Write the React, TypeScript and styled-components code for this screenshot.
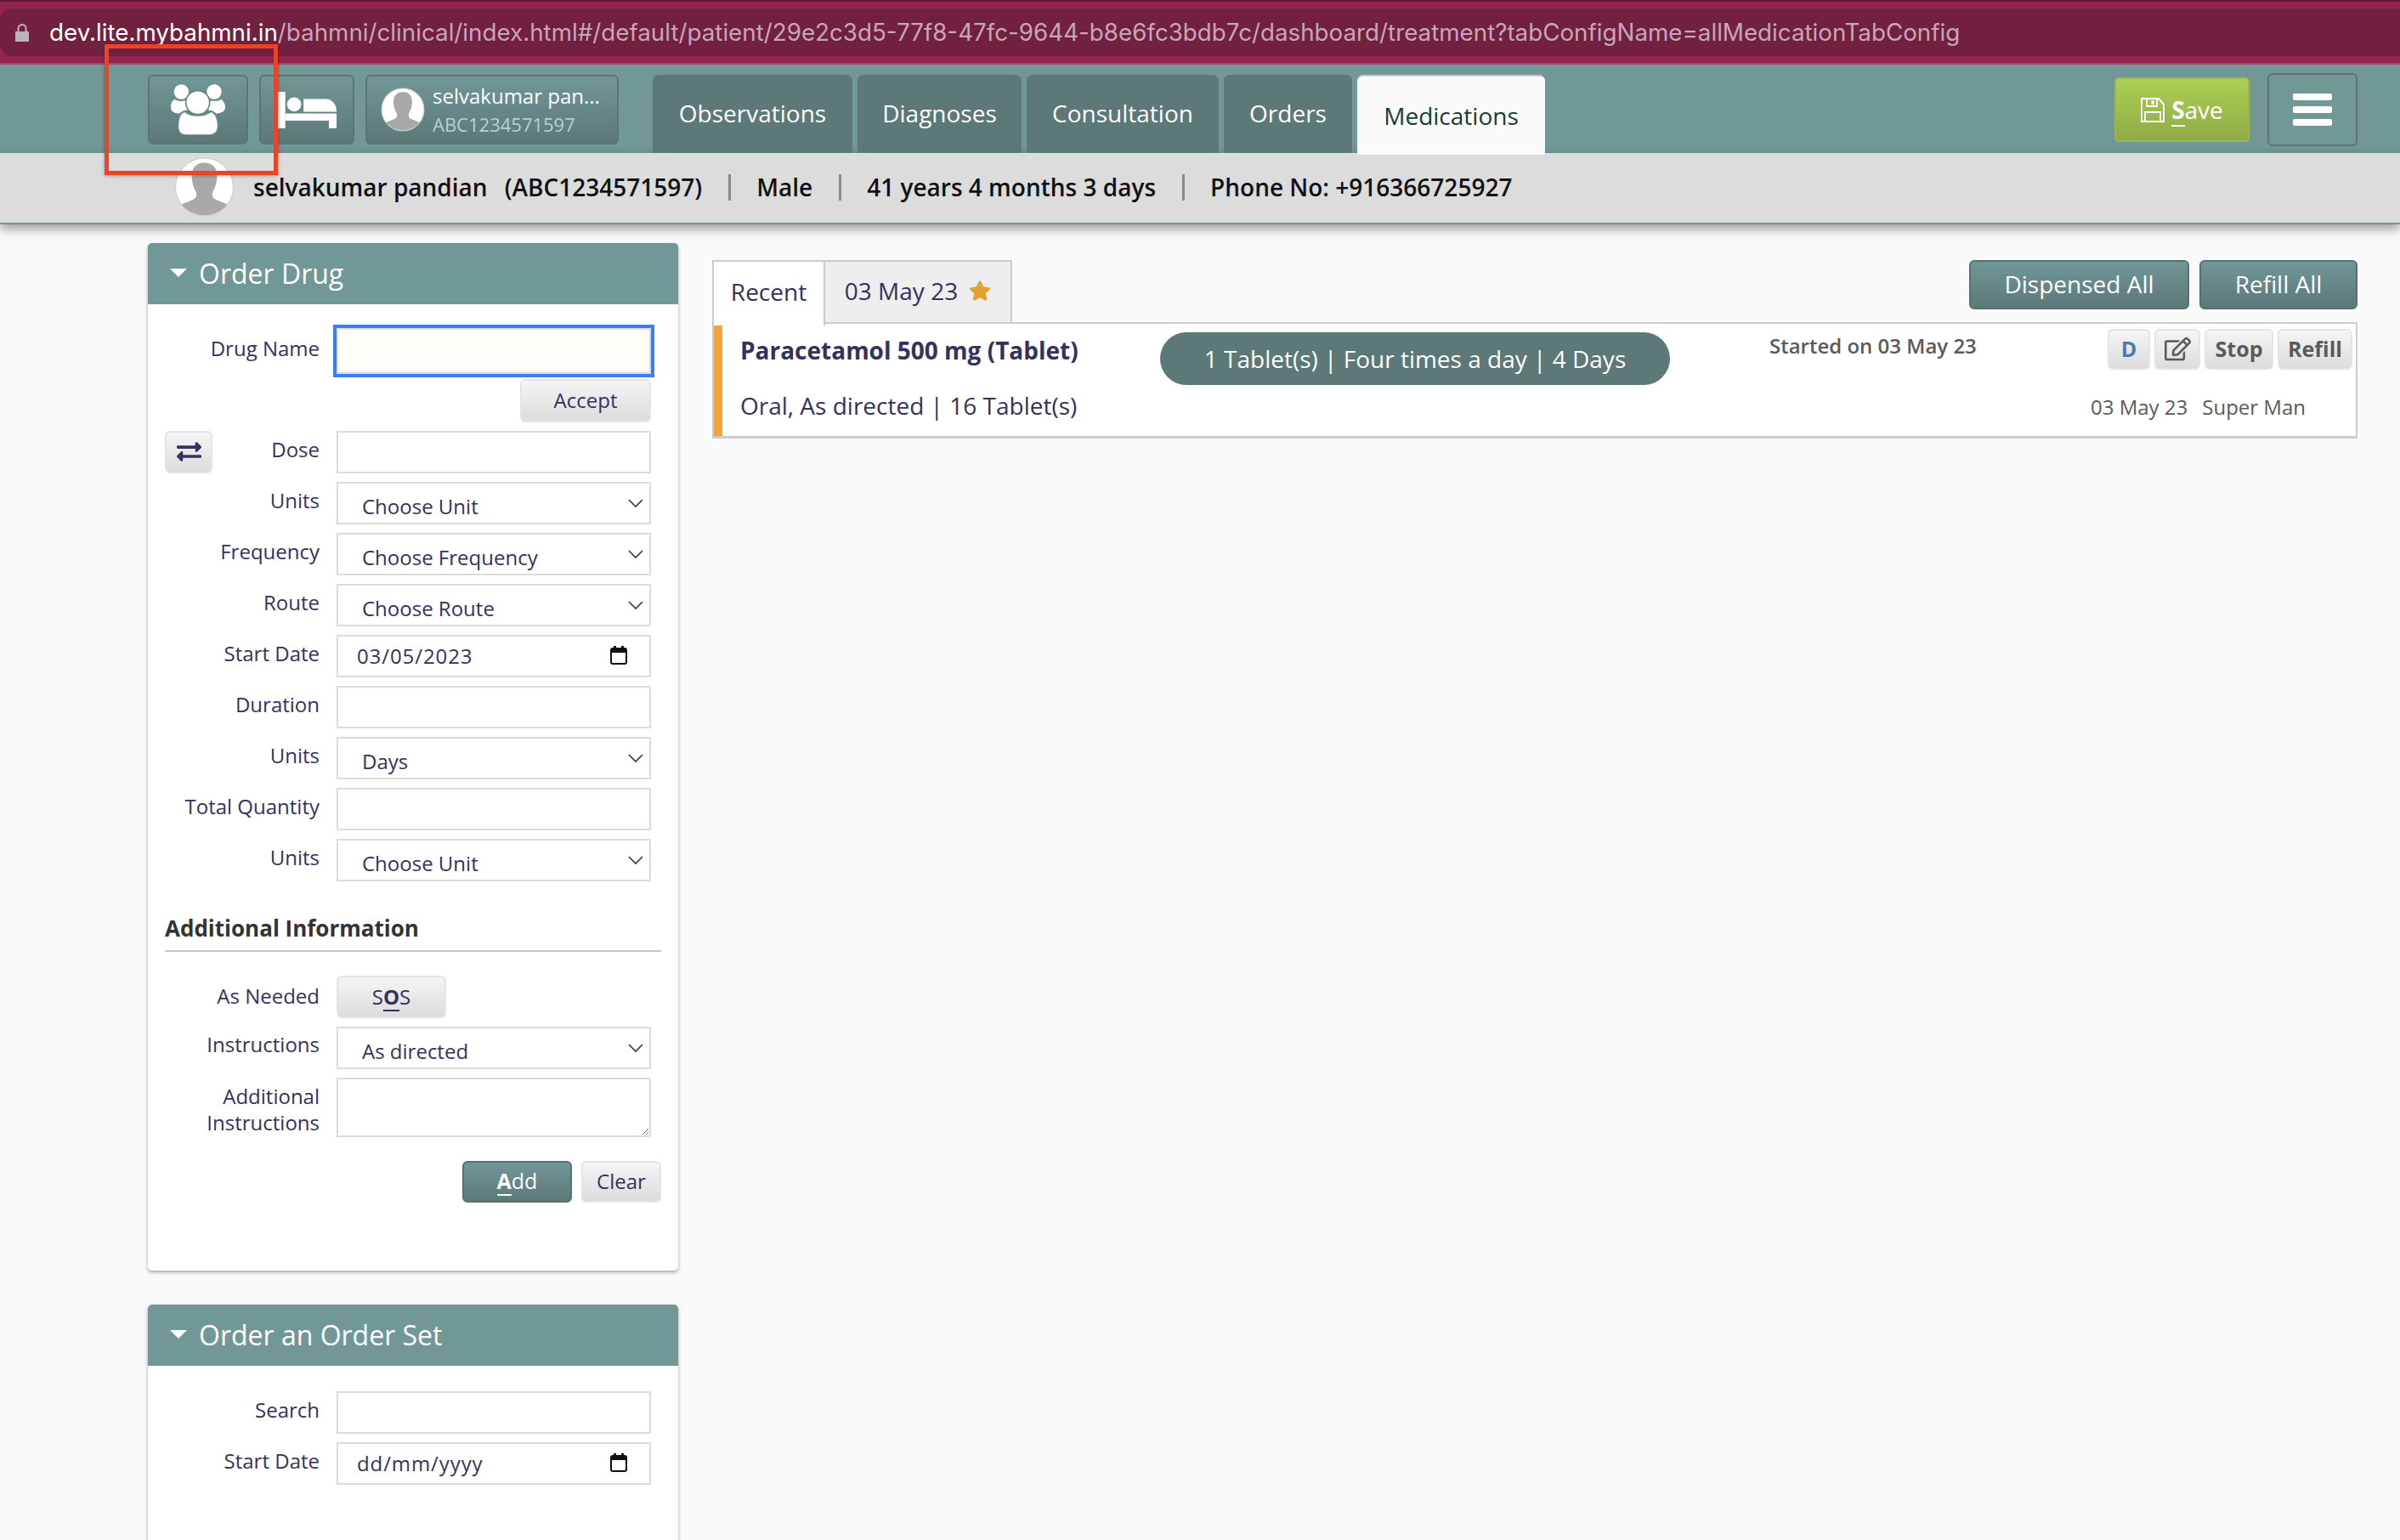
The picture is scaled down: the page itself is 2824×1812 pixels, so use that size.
import React from "react";
import styled, { createGlobalStyle } from "styled-components";
import { FaExchangeAlt, FaRegEdit, FaStar } from "react-icons/fa";

const GlobalStyle = createGlobalStyle`
  html, body {
    margin: 0;
    padding: 0;
    background: #fafafa;
  }
  * {
    box-sizing: border-box;
  }
  body {
    font-family: "Open Sans", "Noto Sans", sans-serif;
    color: #33325f;
  }
`;

const Page = styled.div`
  position: relative;
  width: 2824px;
  height: 1812px;
  overflow: hidden;
`;

const Annotation = styled.div`
  position: absolute;
  left: 123px;
  top: 52px;
  width: 204px;
  height: 154px;
  border: 5px solid #ea4325;
  box-shadow: 0 1px 4px rgba(0, 0, 0, 0.3);
  z-index: 20;
`;

const BrowserBar = styled.div`
  height: 76px;
  padding: 10px 0 8px;
  background: #93244f;
  border-top: 2px solid #5e1a3a;
  border-bottom: 2px solid #a8456c;
`;

const UrlBar = styled.div`
  height: 56px;
  margin-top: -2px;
  display: flex;
  align-items: center;
  gap: 24px;
  padding-left: 18px;
  background: #72203f;
  border-radius: 14px 0 0 14px;
  font-family: Inter, "Liberation Sans", sans-serif;
  font-size: 27.75px;
  color: #c9a5b8;
  white-space: nowrap;
`;

const Host = styled.span`
  color: #fff;
`;

const Header = styled.div`
  height: 104px;
  display: flex;
  padding: 12px 50px 0 174px;
  background: #719797;
`;

const HeaderButton = styled.div<{ $w: number }>`
  width: ${(p) => p.$w}px;
  height: 82px;
  margin-right: 13px;
  display: flex;
  align-items: center;
  justify-content: center;
  border: 2px solid #5a7574;
  border-radius: 6px;
  background: linear-gradient(#719797, #5c7877);
`;

const PatientButton = styled(HeaderButton)`
  justify-content: flex-start;
  gap: 9px;
  padding-left: 16px;
  margin-right: 40px;
`;

const SmallAvatar = styled.div`
  width: 52px;
  height: 52px;
`;

const PatientText = styled.div`
  display: flex;
  flex-direction: column;
  gap: 2px;
  color: #fff;
  font-size: 24px;
  line-height: 32px;
`;

const PatientId = styled.span`
  font-size: 22px;
  line-height: 30px;
  color: #b9cfcf;
`;

const TabRow = styled.div`
  display: flex;
  gap: 6px;
`;

const NavTab = styled.div<{ $w: number; $active?: boolean }>`
  width: ${(p) => p.$w}px;
  height: ${(p) => (p.$active ? 94 : 92)}px;
  display: flex;
  align-items: center;
  justify-content: center;
  padding-bottom: ${(p) => (p.$active ? 0 : 3)}px;
  border-radius: 7px 7px 0 0;
  font-size: 28px;
  position: relative;
  z-index: 2;
  background: ${(p) => (p.$active ? "#fafafa" : "#5c7877")};
  color: ${(p) => (p.$active ? "#123f3b" : "#fff")};
  border-top: ${(p) => (p.$active ? "2px solid #ccc" : "0")};
`;

const HeaderRight = styled.div`
  margin-left: auto;
  display: flex;
  align-items: center;
  gap: 21px;
  height: 86px;
  margin-top: -2px;
`;

const SaveButton = styled.div`
  width: 159px;
  height: 76px;
  display: flex;
  align-items: center;
  justify-content: center;
  gap: 8px;
  border: 2px solid #9ab84f;
  border-radius: 5px;
  background: linear-gradient(#abcf53, #8fab47);
  color: #fff;
  font-size: 28px;
`;

const Key = styled.span`
  display: inline-block;
  font-weight: 700;
  position: relative;
  &::after {
    content: "";
    position: absolute;
    left: 0;
    right: 0;
    bottom: -1px;
    height: 2px;
    background: currentColor;
  }
`;

const MenuButton = styled.div`
  width: 106px;
  height: 86px;
  display: flex;
  flex-direction: column;
  align-items: center;
  justify-content: center;
  gap: 7px;
  border: 2px solid #5a7574;
  border-radius: 6px;
`;

const MenuBar = styled.span`
  width: 46px;
  height: 8px;
  border-radius: 2px;
  background: #fff;
`;

const PatientBar = styled.div`
  height: 84px;
  display: flex;
  align-items: center;
  padding: 0 0 2px 205px;
  background: #dcdcdc;
  border-bottom: 2px solid #719797;
  box-shadow: 0 5px 12px rgba(0, 0, 0, 0.4);
  font-size: 28px;
  font-weight: 600;
  color: #111;
  position: relative;
  z-index: 1;
`;

const BigAvatar = styled.div`
  width: 71px;
  height: 72px;
  margin: 0 22px 0 0;
`;

const PatientName = styled.span`
  margin-right: 20px;
`;

const Separator = styled.span`
  width: 3px;
  height: 31px;
  margin: 0 30.5px;
  background: #8a8a8a;
`;

const Body = styled.div`
  display: grid;
  grid-template-columns: 624px 1936px;
  column-gap: 40px;
  padding: 22px 0 0 174px;
`;

const LeftColumn = styled.div`
  display: flex;
  flex-direction: column;
  gap: 40px;
`;

const Panel = styled.div<{ $h: number }>`
  height: ${(p) => p.$h}px;
  background: #fff;
  border-radius: 5px;
  box-shadow: 0 2px 4px rgba(0, 0, 0, 0.35);
`;

const PanelHead = styled.div`
  height: 72px;
  display: flex;
  align-items: center;
  gap: 14px;
  padding: 0 0 2px 26px;
  background: #719797;
  border-radius: 5px 5px 0 0;
  color: #fff;
  font-size: 32px;
`;

const Caret = styled.span`
  width: 0;
  height: 0;
  border-left: 10px solid transparent;
  border-right: 10px solid transparent;
  border-top: 10px solid #fff;
`;

const PanelBody = styled.div<{ $top: number }>`
  padding: ${(p) => p.$top}px 20px 0;
`;

const Row = styled.div<{ $gap?: number }>`
  display: grid;
  grid-template-columns: 182px 370px;
  column-gap: 20px;
  margin-bottom: ${(p) => p.$gap ?? 10}px;
`;

const LabelCell = styled.div`
  display: flex;
  justify-content: space-between;
  align-items: flex-start;
`;

const Label = styled.label<{ $top?: number }>`
  margin-left: auto;
  font-size: 24px;
  line-height: 31px;
  padding-top: ${(p) => p.$top ?? 6}px;
  text-align: right;
`;

const Input = styled.input`
  display: block;
  width: 370px;
  height: 50px;
  padding: 0 22px 2px;
  border: 2px solid #dcdcdc;
  border-radius: 0;
  background: #fff;
  outline: none;
  font-family: inherit;
  font-size: 24px;
  letter-spacing: 0.9px;
  color: #33325f;
`;

const DrugInput = styled(Input)`
  height: 54px;
  background: #fffdf8;
  border-color: #dcdcdc;
  outline: 4px solid #3b7df5;
  outline-offset: 0;
`;

const SelectWrap = styled.div`
  position: relative;
  width: 370px;
`;

const Select = styled.select`
  display: block;
  width: 370px;
  height: 50px;
  padding: 6px 30px 0 28px;
  appearance: none;
  border: 2px solid #dcdcdc;
  border-radius: 0;
  background: #fff;
  font-family: inherit;
  font-size: 24px;
  color: #33325f;
`;

const Chevron = styled.svg`
  position: absolute;
  right: 9px;
  top: 19px;
  width: 18px;
  height: 12px;
`;

const CalendarIcon = styled.svg`
  position: absolute;
  right: 28px;
  top: 13px;
  width: 20px;
  height: 22px;
`;

const GreyButton = styled.div<{ $w: number; $h: number }>`
  width: ${(p) => p.$w}px;
  height: ${(p) => p.$h}px;
  display: flex;
  align-items: center;
  justify-content: center;
  padding-bottom: 2px;
  border: 2px solid #e4e4e4;
  border-radius: 6px;
  background: linear-gradient(#f5f5f5, #dcdcdc);
  font-size: 24px;
  color: #33325f;
`;

const AcceptRow = styled.div`
  display: flex;
  justify-content: flex-end;
  padding-right: 12px;
  margin: 6px 0 10px;
`;

const SwapButton = styled(GreyButton)`
  font-size: 29px;
`;

const SectionTitle = styled.div`
  margin: 37px 0 28px;
  padding-bottom: 8px;
  border-bottom: 2px solid #c8c8c8;
  font-size: 26px;
  line-height: 36px;
  font-weight: 700;
  color: #333;
  width: 584px;
`;

const TextArea = styled.textarea`
  display: block;
  width: 370px;
  height: 70px;
  border: 2px solid #dcdcdc;
  border-radius: 0;
  background: #fff;
  outline: none;
`;

const FormActions = styled.div`
  display: flex;
  justify-content: flex-end;
  gap: 11px;
  margin-top: 28px;
`;

const TealButton = styled.div<{ $w: number; $h: number }>`
  width: ${(p) => p.$w}px;
  height: ${(p) => p.$h}px;
  display: flex;
  align-items: center;
  justify-content: center;
  padding-bottom: 2px;
  border: 2px solid #557170;
  border-radius: 6px;
  background: linear-gradient(#719797, #5c7877);
  color: #fff;
  font-size: 28px;
`;

const AddButton = styled(TealButton)`
  font-size: 25px;
  padding-bottom: 4px;
`;

const RightColumn = styled.div`
  padding-top: 20px;
`;

const RightTop = styled.div`
  display: flex;
  justify-content: space-between;
  height: 73px;
`;

const TabStrip = styled.div`
  display: flex;
  position: relative;
  z-index: 2;
`;

const DateTab = styled.div<{ $w: number; $active?: boolean }>`
  width: ${(p) => p.$w}px;
  height: ${(p) => (p.$active ? 77 : 75)}px;
  display: flex;
  align-items: center;
  justify-content: center;
  gap: 13px;
  padding-bottom: ${(p) => (p.$active ? 6 : 4)}px;
  border: 2px solid #ccc;
  border-left-width: ${(p) => (p.$active ? 2 : 0)}px;
  border-bottom-width: ${(p) => (p.$active ? 0 : 2)}px;
  background: ${(p) => (p.$active ? "#fff" : "#eee")};
  font-size: 28px;
`;

const StarIcon = styled(FaStar)`
  color: #e3a230;
  font-size: 26px;
`;

const TopActions = styled.div`
  display: flex;
  gap: 12px;
`;

const MedPanel = styled.div`
  height: 137px;
  padding-left: 11px;
  background: #fff;
  border: 2px solid #ccc;
  border-width: 2px 2px 3px 2px;
  position: relative;
  &::before {
    content: "";
    position: absolute;
    left: 0;
    top: 0;
    bottom: 0;
    width: 10px;
    background: #f0a63a;
  }
`;

const MedTop = styled.div`
  display: grid;
  grid-template-columns: 494px 717px 1fr auto;
  padding: 5px 4px 0 20px;
  align-items: start;
`;

const DrugTitle = styled.div`
  font-size: 28px;
  font-weight: 700;
  line-height: 38px;
  padding-top: 7px;
`;

const Pill = styled.div`
  width: 600px;
  height: 62px;
  margin-top: 5px;
  display: flex;
  align-items: center;
  justify-content: center;
  border-radius: 31px;
  background: #5c7877;
  color: #fff;
  font-size: 28px;
`;

const Started = styled.div`
  font-size: 24px;
  font-weight: 600;
  line-height: 34px;
  padding-top: 4px;
  color: #5a5a5a;
`;

const RowActions = styled.div`
  display: flex;
  gap: 5px;
  padding-top: 1px;
`;

const SmallButton = styled(GreyButton)<{ $blue?: boolean }>`
  font-size: 25px;
  font-weight: 700;
  color: ${(p) => (p.$blue ? "#4a7cad" : "#5a5a5a")};
`;

const MedBottom = styled.div`
  display: flex;
  justify-content: space-between;
  align-items: flex-start;
  padding: 5px 59px 0 20px;
`;

const MedRoute = styled.div`
  font-size: 28px;
`;

const MedMeta = styled.div`
  display: flex;
  gap: 17px;
  padding-top: 4px;
  font-size: 24px;
  color: #5a5a5a;
`;

const Silhouette: React.FC = () => (
  <svg viewBox="0 0 100 100" width="100%" height="100%">
    <circle cx="50" cy="50" r="48" fill="#fff" stroke="#d0d0d0" strokeWidth="2" />
    <path
      d="M50 10c-14 0-21 9-21 22 0 10 3 19 7 26 2 5 1 9-3 12l-21 9c9 11 23 18 38 18s29-7 38-18l-21-9c-4-3-5-7-3-12 4-7 7-16 7-26 0-13-7-22-21-22z"
      fill="#a9a9a9"
    />
  </svg>
);

const GroupIcon: React.FC = () => (
  <svg viewBox="95 40 192 180" width="64" height="60" fill="#fff">
    <circle cx="132" cy="67" r="26" />
    <circle cx="248" cy="67" r="26" />
    <path d="M108 94c10 6 26 8 38 4 0 14 6 26 14 32-18 2-30 8-36 14-16-2-29-6-29-22 0-12 4-24 13-28z" />
    <path d="M272 94c-10 6-26 8-38 4 0 14-6 26-14 32 18 2 30 8 36 14 16-2 31-6 31-22 0-12-6-24-15-28z" />
    <circle cx="190" cy="105" r="42" stroke="#668887" strokeWidth="5" />
    <path
      d="M143 136c12 9 30 15 47 15s35-6 47-15c15 6 25 24 25 52 0 22-14 32-30 32h-84c-16 0-28-10-28-32 0-28 8-46 23-52z"
      stroke="#668887"
      strokeWidth="5"
    />
  </svg>
);

const BedIcon: React.FC = () => (
  <svg viewBox="465 67 215 128" width="72" height="43" fill="#fff">
    <rect x="465" y="67" width="32" height="128" />
    <circle cx="528" cy="111" r="25" />
    <path d="M561 92h79c21 0 37 18 37 45H561z" />
    <rect x="497" y="143" width="180" height="25" />
    <rect x="650" y="168" width="27" height="27" />
  </svg>
);

const FloppyIcon: React.FC = () => (
  <svg viewBox="0 0 28 29" width="28" height="29" fill="none" stroke="#fff" strokeWidth="2">
    <path d="M1 1h20l6 7v20H1z" strokeLinejoin="round" />
    <path d="M7 1v9h12V1" />
    <path d="M14 3v5" strokeWidth="3" />
    <path d="M5 28V17h18v11" />
  </svg>
);

const LockIcon: React.FC = () => (
  <svg viewBox="0 0 16 21" width="16" height="21" fill="#b9b3b8">
    <path d="M0 9h16v12H0z" />
    <path d="M3.5 9V5.5a4.5 4.5 0 0 1 9 0V9" fill="none" stroke="#b9b3b8" strokeWidth="2" />
  </svg>
);

const ChevronDown: React.FC = () => (
  <Chevron viewBox="0 0 18 12">
    <path d="M1 2l8 8 8-8" fill="none" stroke="#33325f" strokeWidth="1.6" />
  </Chevron>
);

const Calendar: React.FC = () => (
  <CalendarIcon viewBox="0 0 20 22">
    <path d="M4 0h3v3H4zM13 0h3v3h-3z" fill="#111" />
    <rect x="1" y="3" width="18" height="18" rx="2" fill="none" stroke="#111" strokeWidth="2" />
    <rect x="1" y="3" width="18" height="5" fill="#111" />
  </CalendarIcon>
);

const Dropdown: React.FC<{ value: string }> = ({ value }) => (
  <SelectWrap>
    <Select value={value} onChange={() => undefined}>
      <option>{value}</option>
    </Select>
    <ChevronDown />
  </SelectWrap>
);

const DateField: React.FC<{ value: string }> = ({ value }) => (
  <SelectWrap>
    <Input type="text" value={value} readOnly />
    <Calendar />
  </SelectWrap>
);

const App: React.FC = () => {
  return (
    <Page>
      <GlobalStyle />
      <Annotation />
      <BrowserBar>
        <UrlBar>
          <LockIcon />
          <span>
            <Host>dev.lite.mybahmni.in</Host>
            /bahmni/clinical/index.html#/default/patient/29e2c3d5-77f8-47fc-9644-b8e6fc3bdb7c/dashboard/treatment?tabConfigName=allMedicationTabConfig
          </span>
        </UrlBar>
      </BrowserBar>

      <Header>
        <HeaderButton $w={118}>
          <GroupIcon />
        </HeaderButton>
        <HeaderButton $w={112}>
          <BedIcon />
        </HeaderButton>
        <PatientButton $w={298}>
          <SmallAvatar>
            <Silhouette />
          </SmallAvatar>
          <PatientText>
            <span>selvakumar pan...</span>
            <PatientId>ABC1234571597</PatientId>
          </PatientText>
        </PatientButton>
        <TabRow>
          <NavTab $w={235}>Observations</NavTab>
          <NavTab $w={193}>Diagnoses</NavTab>
          <NavTab $w={226}>Consultation</NavTab>
          <NavTab $w={151}>Orders</NavTab>
          <NavTab $w={221} $active>
            Medications
          </NavTab>
        </TabRow>
        <HeaderRight>
          <SaveButton>
            <FloppyIcon />
            <span>
              <Key>S</Key>ave
            </span>
          </SaveButton>
          <MenuButton>
            <MenuBar />
            <MenuBar />
            <MenuBar />
          </MenuButton>
        </HeaderRight>
      </Header>

      <PatientBar>
        <BigAvatar>
          <Silhouette />
        </BigAvatar>
        <PatientName>selvakumar pandian</PatientName>
        <span>(ABC1234571597)</span>
        <Separator />
        <span>Male</span>
        <Separator />
        <span>41 years 4 months 3 days</span>
        <Separator />
        <span>Phone No: +916366725927</span>
      </PatientBar>

      <Body>
        <LeftColumn>
          <Panel $h={1209}>
            <PanelHead>
              <Caret />
              Order Drug
            </PanelHead>
            <PanelBody $top={28}>
              <Row $gap={0}>
                <LabelCell>
                  <Label $top={8}>Drug Name</Label>
                </LabelCell>
                <DrugInput />
              </Row>
              <AcceptRow>
                <GreyButton $w={154} $h={51}>
                  Accept
                </GreyButton>
              </AcceptRow>
              <Row>
                <LabelCell>
                  <SwapButton $w={56} $h={50}>
                    <FaExchangeAlt />
                  </SwapButton>
                  <Label>Dose</Label>
                </LabelCell>
                <Input />
              </Row>
              <Row>
                <LabelCell>
                  <Label>Units</Label>
                </LabelCell>
                <Dropdown value="Choose Unit" />
              </Row>
              <Row>
                <LabelCell>
                  <Label>Frequency</Label>
                </LabelCell>
                <Dropdown value="Choose Frequency" />
              </Row>
              <Row>
                <LabelCell>
                  <Label>Route</Label>
                </LabelCell>
                <Dropdown value="Choose Route" />
              </Row>
              <Row>
                <LabelCell>
                  <Label>Start Date</Label>
                </LabelCell>
                <DateField value="03/05/2023" />
              </Row>
              <Row>
                <LabelCell>
                  <Label>Duration</Label>
                </LabelCell>
                <Input />
              </Row>
              <Row>
                <LabelCell>
                  <Label>Units</Label>
                </LabelCell>
                <Dropdown value="Days" />
              </Row>
              <Row>
                <LabelCell>
                  <Label>Total Quantity</Label>
                </LabelCell>
                <Input />
              </Row>
              <Row $gap={0}>
                <LabelCell>
                  <Label>Units</Label>
                </LabelCell>
                <Dropdown value="Choose Unit" />
              </Row>
              <SectionTitle>Additional Information</SectionTitle>
              <Row>
                <LabelCell>
                  <Label $top={8}>As Needed</Label>
                </LabelCell>
                <GreyButton $w={129} $h={50}>
                  <span>
                    S<Key>O</Key>S
                  </span>
                </GreyButton>
              </Row>
              <Row>
                <LabelCell>
                  <Label $top={5}>Instructions</Label>
                </LabelCell>
                <Dropdown value="As directed" />
              </Row>
              <Row $gap={0}>
                <LabelCell>
                  <Label>Additional Instructions</Label>
                </LabelCell>
                <TextArea />
              </Row>
              <FormActions>
                <AddButton $w={129} $h={49}>
                  <span>
                    <Key>A</Key>dd
                  </span>
                </AddButton>
                <GreyButton $w={94} $h={49}>
                  Clear
                </GreyButton>
              </FormActions>
            </PanelBody>
          </Panel>
          <Panel $h={400}>
            <PanelHead>
              <Caret />
              Order an Order Set
            </PanelHead>
            <PanelBody $top={30}>
              <Row>
                <LabelCell>
                  <Label>Search</Label>
                </LabelCell>
                <Input />
              </Row>
              <Row>
                <LabelCell>
                  <Label>Start Date</Label>
                </LabelCell>
                <DateField value="dd/mm/yyyy" />
              </Row>
            </PanelBody>
          </Panel>
        </LeftColumn>

        <RightColumn>
          <RightTop>
            <TabStrip>
              <DateTab $w={133} $active>
                Recent
              </DateTab>
              <DateTab $w={220}>
                03 May 23
                <StarIcon />
              </DateTab>
            </TabStrip>
            <TopActions>
              <TealButton $w={259} $h={58}>
                Dispensed All
              </TealButton>
              <TealButton $w={186} $h={58}>
                Refill All
              </TealButton>
            </TopActions>
          </RightTop>
          <MedPanel>
            <MedTop>
              <DrugTitle>Paracetamol 500 mg (Tablet)</DrugTitle>
              <Pill>1 Tablet(s) | Four times a day | 4 Days</Pill>
              <Started>Started on 03 May 23</Started>
              <RowActions>
                <SmallButton $w={50} $h={48} $blue>
                  D
                </SmallButton>
                <SmallButton $w={54} $h={48}>
                  <FaRegEdit size={31} />
                </SmallButton>
                <SmallButton $w={81} $h={48}>
                  Stop
                </SmallButton>
                <SmallButton $w={88} $h={48}>
                  Refill
                </SmallButton>
              </RowActions>
            </MedTop>
            <MedBottom>
              <MedRoute>Oral, As directed | 16 Tablet(s)</MedRoute>
              <MedMeta>
                <span>03 May 23</span>
                <span>Super Man</span>
              </MedMeta>
            </MedBottom>
          </MedPanel>
        </RightColumn>
      </Body>
    </Page>
  );
};

export default App;
